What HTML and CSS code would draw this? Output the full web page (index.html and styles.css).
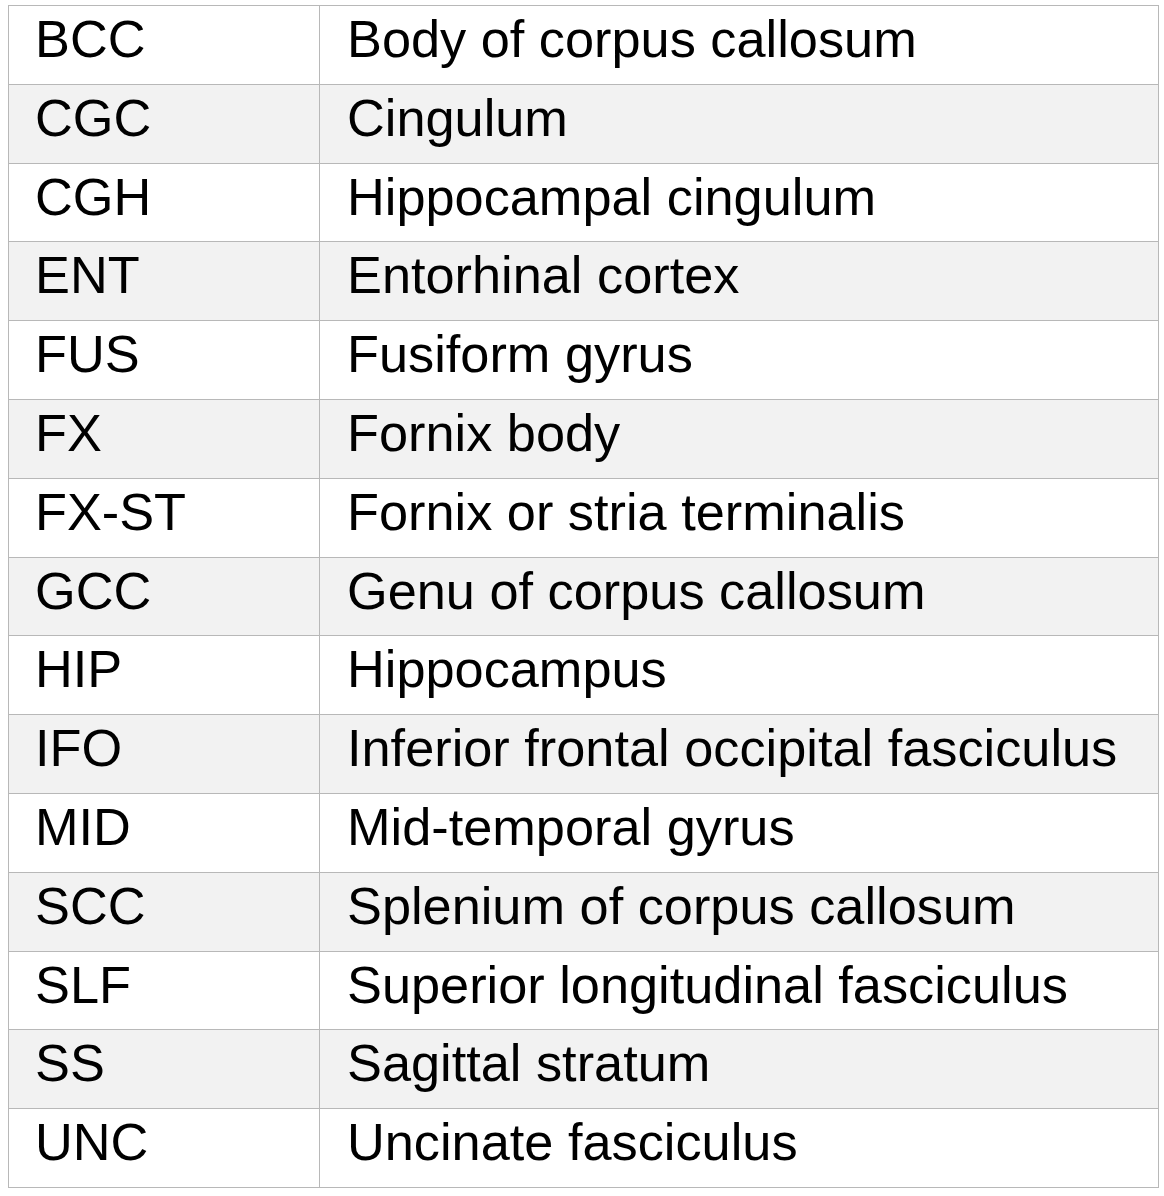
FILE: index.html
```html
<!DOCTYPE html>
<html>
<head>
<meta charset="utf-8">
<link rel="stylesheet" href="styles.css">
</head>
<body>
<table class="abbr">
  <tbody>
    <tr><td class="code">BCC</td><td class="name">Body of corpus callosum</td></tr>
    <tr class="alt"><td class="code">CGC</td><td class="name">Cingulum</td></tr>
    <tr><td class="code">CGH</td><td class="name">Hippocampal cingulum</td></tr>
    <tr class="alt"><td class="code">ENT</td><td class="name">Entorhinal cortex</td></tr>
    <tr><td class="code">FUS</td><td class="name">Fusiform gyrus</td></tr>
    <tr class="alt"><td class="code">FX</td><td class="name">Fornix body</td></tr>
    <tr><td class="code">FX-ST</td><td class="name">Fornix or stria terminalis</td></tr>
    <tr class="alt"><td class="code">GCC</td><td class="name">Genu of corpus callosum</td></tr>
    <tr><td class="code">HIP</td><td class="name">Hippocampus</td></tr>
    <tr class="alt"><td class="code">IFO</td><td class="name">Inferior frontal occipital fasciculus</td></tr>
    <tr><td class="code">MID</td><td class="name">Mid-temporal gyrus</td></tr>
    <tr class="alt"><td class="code">SCC</td><td class="name">Splenium of corpus callosum</td></tr>
    <tr><td class="code">SLF</td><td class="name">Superior longitudinal fasciculus</td></tr>
    <tr class="alt"><td class="code">SS</td><td class="name">Sagittal stratum</td></tr>
    <tr><td class="code">UNC</td><td class="name">Uncinate fasciculus</td></tr>
  </tbody>
</table>
</body>
</html>
```

FILE: styles.css
```css
html, body {
  margin: 0;
  padding: 0;
  background: #ffffff;
}

body {
  padding: 5px 0 0 8px;
  font-family: "Liberation Sans", Arial, Helvetica, sans-serif;
  color: #000000;
}

.abbr {
  border-collapse: separate;
  border-spacing: 0;
  width: 1151px;
  table-layout: fixed;
  border-top: 1px solid #b8b8b8;
  border-left: 1px solid #b8b8b8;
}

.abbr td {
  box-sizing: border-box;
  height: 78.8px;
  vertical-align: top;
  font-size: 52.3px;
  line-height: normal;
  padding-top: 3px;
  border-right: 1px solid #b8b8b8;
  border-bottom: 1px solid #b8b8b8;
  white-space: nowrap;
}

.abbr td.code {
  width: 311px;
  padding-left: 26px;
}

.abbr td.name {
  padding-left: 27px;
}

.abbr tr.alt td {
  background: #f2f2f2;
}
```
